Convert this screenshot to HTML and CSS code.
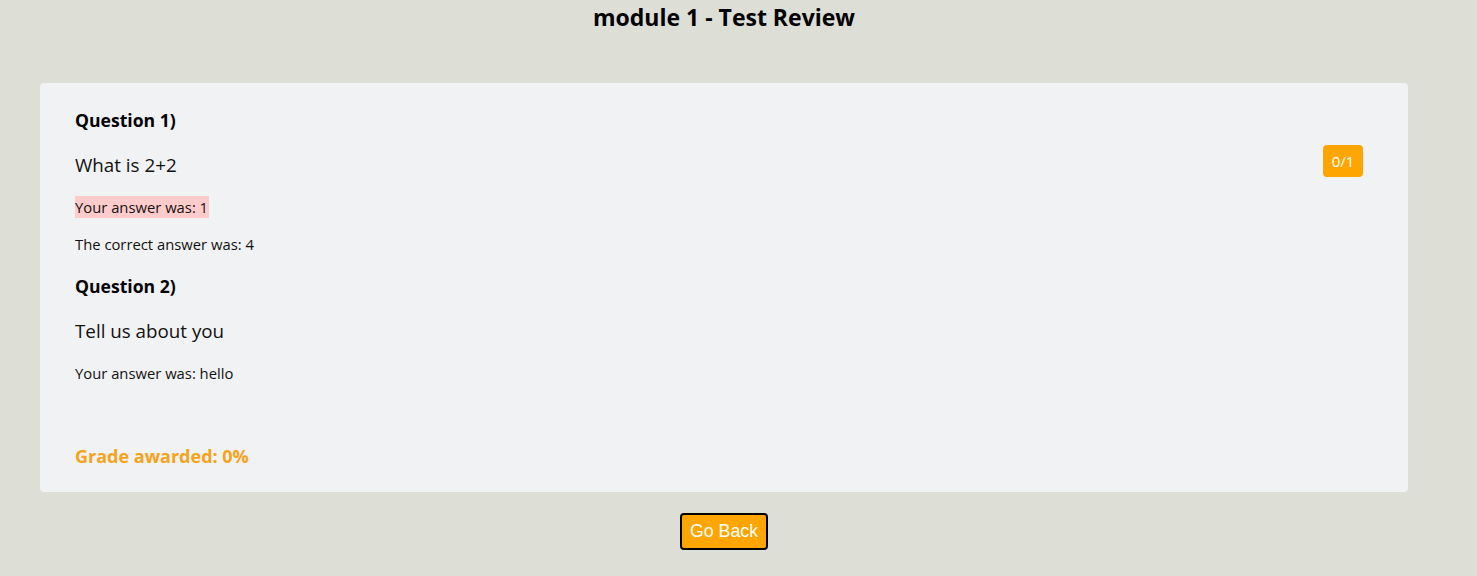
FILE: index.html
```html
<!DOCTYPE html>
<html>
<head>
<meta charset="utf-8">
<link rel="stylesheet" href="styles.css">
</head>
<body>
<div class="page">
  <h1 class="title">module 1 - Test Review</h1>
  <div class="card">
    <div class="question">
      <div class="q-label">Question 1)</div>
      <div class="q-row">
        <div class="q-text">What is 2+2</div>
        <div class="badge">0/1</div>
      </div>
      <div class="answer"><span class="wrong">Your answer was: 1</span></div>
      <div class="answer">The correct answer was: 4</div>
    </div>
    <div class="question">
      <div class="q-label">Question 2)</div>
      <div class="q-row">
        <div class="q-text">Tell us about you</div>
      </div>
      <div class="answer">Your answer was: hello</div>
    </div>
    <div class="grade">Grade awarded: 0%</div>
  </div>
  <div class="actions">
    <button class="back">Go Back</button>
  </div>
</div>
</body>
</html>
```
FILE: styles.css
```css
html, body {
  margin: 0;
  padding: 0;
}
body {
  background: #ddded5;
  font-family: "Open Sans", "Noto Sans", sans-serif;
  color: #111;
}
.page {
  margin-right: 29px;
}
.title {
  margin: 0;
  padding-top: 2px;
  height: 83px;
  text-align: center;
  font-size: 23px;
  font-weight: 700;
  line-height: 30px;
  color: #000;
  box-sizing: border-box;
}
.card {
  margin: 0 40px;
  background: #f1f2f4;
  border-radius: 4px;
  padding: 25px 45px 24px 35px;
  height: 409px;
  box-sizing: border-box;
  display: flex;
  flex-direction: column;
}
.q-label {
  font-size: 17.6px;
  font-weight: 700;
  line-height: 24px;
  color: #000;
}
.q-row {
  display: flex;
  justify-content: space-between;
  align-items: center;
  margin-top: 20px;
  height: 26px;
}
.q-text {
  font-size: 18.8px;
  line-height: 26px;
}
.badge {
  background: #ffa500;
  color: #fff;
  font-size: 15px;
  border-radius: 4px;
  width: 40px;
  height: 32px;
  line-height: 32px;
  text-align: center;
  margin-bottom: 8px;
}
.answer {
  font-size: 14.8px;
  line-height: 20px;
  margin-top: 19px;
}
.answer + .answer {
  margin-top: 17px;
}
.wrong {
  background: #ffcccb;
  padding: 1px 1px 1px 0;
}
.question + .question {
  margin-top: 20px;
}
.grade {
  margin-top: auto;
  font-size: 18px;
  font-weight: 700;
  color: #f5a31a;
  line-height: 24px;
}
.actions {
  display: flex;
  justify-content: center;
  padding-top: 21px;
}
.back {
  background: #ffa500;
  color: #fff;
  border: 2px solid #000;
  border-radius: 4px;
  font-family: "Liberation Sans", Arial, sans-serif;
  font-size: 17.8px;
  width: 88px;
  height: 37px;
  padding: 0;
  cursor: pointer;
}
```
